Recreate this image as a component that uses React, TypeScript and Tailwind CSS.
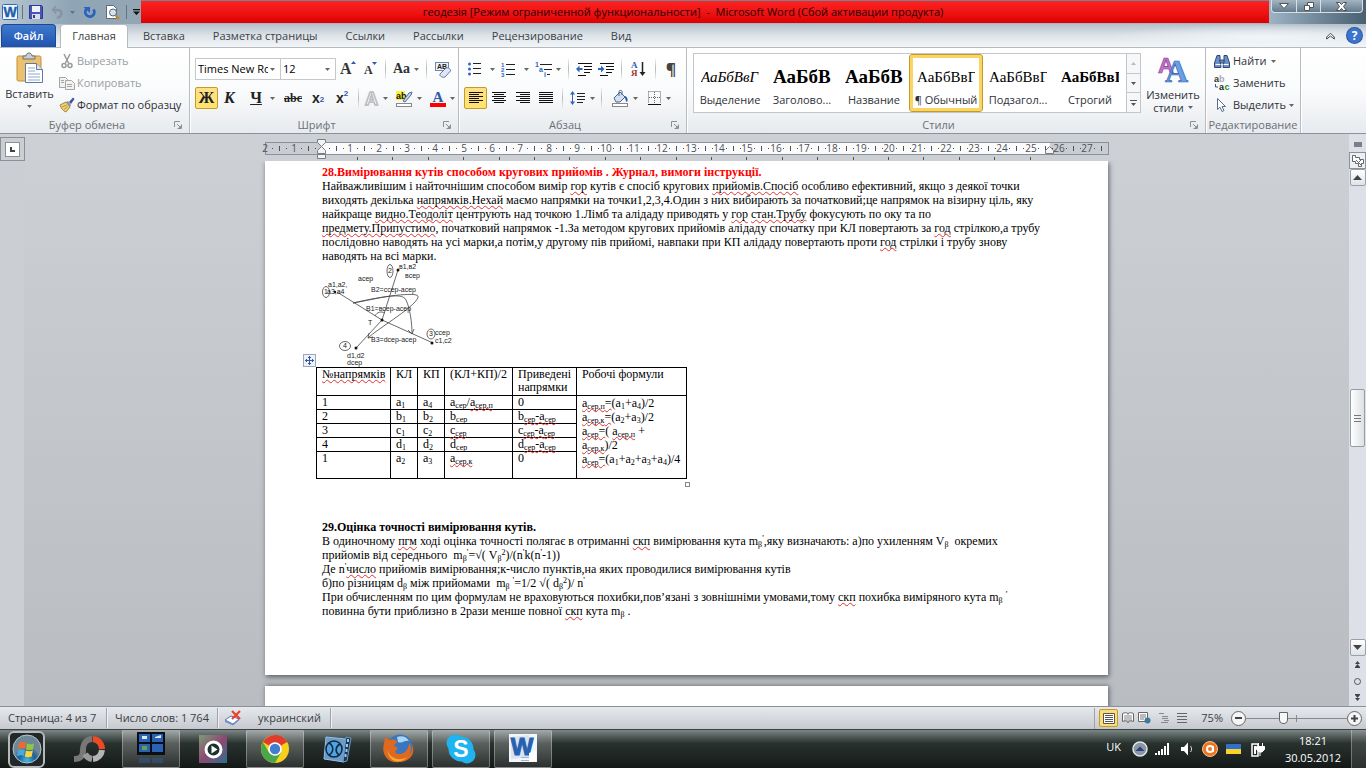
import type { ReactNode } from "react";

/* ---------- small shared parts ---------- */

function Caret({ className = "text-[#666]" }: { className?: string }) {
  return (
    <svg width="5" height="3" viewBox="0 0 5 3" className={`shrink-0 ${className}`} aria-hidden="true">
      <path d="M0 0h5L2.5 3z" fill="currentColor" />
    </svg>
  );
}

function Divider() {
  return <span className="mx-1 h-5 w-px shrink-0 bg-linear-to-b from-[#eceef0] via-[#b5bac0] to-[#eceef0]" />;
}

function Tool({ label, className = "", caret, active, children }: {
  label: string; className?: string; caret?: boolean; active?: boolean; children: ReactNode;
}) {
  return (
    <button
      type="button"
      aria-label={label}
      className={`flex h-[22px] shrink-0 items-center justify-center rounded-xs [&_svg]:overflow-visible ${caret ? "gap-1" : ""} ${active ? "border border-[#c29b29] bg-linear-to-b from-[#fde089] to-[#ffe36c]" : ""} ${className}`}
    >
      {children}
      {caret && <Caret />}
    </button>
  );
}

function Group({ title, className = "", launcher = true, children }: {
  title: string; className?: string; launcher?: boolean; children: ReactNode;
}) {
  return (
    <section aria-label={title} className={`flex shrink-0 flex-col border-r border-[#b8bcc2] shadow-[1px_0_0_#fff] ${className}`}>
      <div className="flex h-[69px]">{children}</div>
      <div className="flex h-4 items-center text-[#6b7076]">
        <span className="flex-1 text-center whitespace-nowrap">{title}</span>
        {launcher && (
          <button type="button" aria-label={`${title}: параметры`} className="w-[15px]">
            <svg width="8" height="8" viewBox="0 0 8 8" fill="none" stroke="#8b9097">
              <path d="M.5 6V.5H6" />
              <path d="M3 3l3 3M7.500 3.500v4h-4" />
              <path d="M4.500 7L7 4.500V7z" fill="#8b9097" stroke="none" />
            </svg>
          </button>
        )}
      </div>
    </section>
  );
}

/* ---------- title bar ---------- */

function TitleBar() {
  return (
    <header className="flex h-6 items-start bg-linear-to-b from-[#6d8799] to-[#a6b6c2]">
      <div className="flex h-6 w-[141px] shrink-0 items-center bg-linear-to-r from-[#b8c8d5] via-[#8fa5b5] to-[#93a6b4] pl-0.5 [&_svg]:shrink-0">
        <svg width="16" height="16" viewBox="0 0 16 16" aria-hidden="true">
          <rect x=".5" y=".5" width="15" height="15" rx="1" fill="#f4f8fd" stroke="#2f6dbb" />
          <text x="8" y="13" textAnchor="middle" fontFamily="Liberation Sans" fontWeight="bold" fontSize="14" fill="#1f5fa8" stroke="#1f5fa8" strokeWidth=".4">W</text>
        </svg>
        <span className="mx-1 h-3.5 w-px bg-[#66727d]" />
        <button type="button" aria-label="Сохранить" className="ml-0.5">
          <svg width="14" height="14" viewBox="0 0 14 14">
            <path d="M.5.500h12l1 1v12H.5z" fill="#4a54b5" stroke="#2f3889" />
            <rect x="3" y="1" width="8" height="6" fill="#eef1fb" />
            <rect x="3" y="9" width="8" height="5" fill="#d8dcf0" />
            <rect x="4" y="10" width="2" height="3" fill="#333b83" />
          </svg>
        </button>
        <button type="button" aria-label="Отменить" className="ml-2 flex items-center gap-1.5">
          <svg width="13" height="13" viewBox="0 0 13 13" fill="none" stroke="#8794a0" strokeWidth="2.500">
            <path d="M6 12c6-2 6-8 0-8H3" />
            <path d="M5 0L1.500 3.800 5 7.500" strokeWidth="1.500" />
          </svg>
          <Caret className="text-[#65727d]" />
        </button>
        <button type="button" aria-label="Повторить" className="ml-2">
          <svg width="14" height="13" viewBox="0 0 14 13" fill="none" stroke="#2a62c0" strokeWidth="2.800">
            <path d="M3.500 3a4.500 4.500 0 1 0 7 .5" />
            <path d="M.5 1h6.500v6z" fill="#2a62c0" stroke="none" />
          </svg>
        </button>
        <button type="button" aria-label="Предварительный просмотр" className="ml-2">
          <svg width="15" height="15" viewBox="0 0 15 15">
            <path d="M1.500.500h7l3 3v10h-10z" fill="#fff" stroke="#667" />
            <circle cx="8" cy="7.500" r="3.500" fill="#cfe4f7" stroke="#556677" />
            <path d="M10.500 10l3.500 4" stroke="#c8862a" strokeWidth="2.500" />
          </svg>
        </button>
        <span className="mx-1.5 h-3.5 w-px bg-[#66727d]" />
        <button type="button" aria-label="Настройка панели быстрого доступа">
          <svg width="7" height="6" viewBox="0 0 7 6"><path d="M0 0h7v1.200H0zM0 2.500h7L3.500 6z" fill="#111" /></svg>
        </button>
      </div>
      <h1 className="mt-px h-[22px] flex-1 bg-linear-to-b from-[#ff2222] to-[#dd0000] pr-11 text-center leading-[22px] whitespace-pre text-[#2c0000]">
        геодезія [Режим ограниченной функциональности]  -  Microsoft Word (Сбой активации продукта)
      </h1>
      <div className="h-6 w-[97px] shrink-0 bg-linear-to-r from-[#9eb4c4] to-[#48606f] pl-0.5">
        <div className="flex h-[13px] w-[92px] rounded-b-sm border border-t-0 border-[#d5e0e8] bg-linear-to-b from-[#a4b5c2] to-[#637b8d]">
          <button type="button" aria-label="Свернуть" className="flex w-[25px] items-center justify-center border-r border-[#d5e0e8]">
            <svg width="10" height="6" viewBox="0 0 10 6"><path d="M.5.500h9L5 5.500z" fill="#fff" stroke="#555" /></svg>
          </button>
          <button type="button" aria-label="Развернуть" className="flex w-[24px] items-center justify-center border-r border-[#d5e0e8]">
            <svg width="10" height="9" viewBox="0 0 10 9" fill="#fff" stroke="#555"><path d="M3.500.500h6v5h-6z" /><path d="M.5 3.500h5v5h-5z" /></svg>
          </button>
          <button type="button" aria-label="Закрыть" className="flex flex-1 items-center justify-center">
            <svg width="11" height="9" viewBox="0 0 11 9"><path d="M.5.500h3l2 2 2-2h3l-3 4 3 4h-3l-2-2-2 2h-3l3-4z" fill="#fff" stroke="#4d4d4d" /></svg>
          </button>
        </div>
      </div>
    </header>
  );
}

const tabs = ["Вставка", "Разметка страницы", "Ссылки", "Рассылки", "Рецензирование", "Вид"];

function TabStrip() {
  return (
    <nav className="flex h-6 items-end border-b border-[#b4bac1] bg-linear-to-b from-[#b5c1ca] via-[#dde3e8] to-[#f3f5f7] pl-px text-[#3b3f45]">
      <a href="#file" className="h-[23px] w-[55px] rounded-t-sm border border-b-0 border-[#1d478f] bg-linear-to-b from-[#3f79cf] to-[#1f52ae] text-center leading-[22px] font-semibold text-white">
        Файл
      </a>
      <a href="#home" className="mr-px -mb-px ml-1 h-6 w-[68px] rounded-t-sm border border-b-0 border-[#b4bac1] bg-white text-center leading-[22px]">
        Главная
      </a>
      {tabs.map((t) => (
        <a key={t} href="#tab" className="h-[23px] px-[14px] leading-[23px] whitespace-nowrap">{t}</a>
      ))}
      <div className="ml-auto flex h-full w-[260px] items-center justify-end gap-3 bg-radial-[at_60%_60%] from-[#f1f5f9] to-transparent to-70% pr-1">
        <button type="button" aria-label="Свернуть ленту">
          <svg width="9" height="8" viewBox="0 0 9 8" fill="none" stroke="#444"><path d="M.7 5L4.500 1.200 8.300 5v2L4.500 4 .7 7z" fill="#fff" /></svg>
        </button>
        <button type="button" aria-label="Справка" className="size-[15px] rounded-full bg-[#3b74cc] text-center text-xs leading-[15px] font-bold text-white shadow-[0_0_0_1px_#2a58a5]">?</button>
      </div>
    </nav>
  );
}

/* ---------- ribbon ---------- */

function Lines({ rows }: { rows: [number, number][] }) {
  return (
    <svg width="16" height="14" viewBox="0 0 16 14" aria-hidden="true">
      {rows.map(([x, w], i) => <rect key={i} x={x} y={1 + i * 2} width={w} height="1" fill="#111" />)}
    </svg>
  );
}

function ClipboardGroup() {
  return (
    <Group title="Буфер обмена" className="w-[190px]">
      <button type="button" className="flex w-[59px] flex-col items-center pt-1">
        <svg width="28" height="32" viewBox="0 0 28 32">
          <rect x="1" y="4" width="24" height="25" rx="1.500" fill="#ecc06c" stroke="#c58f35" />
          <path d="M7 7V4h3c0-4 6-4 6 0h3v3z" fill="#c9ced4" stroke="#6a7077" />
          <path d="M9.500 11.500h11l6 6v13h-17z" fill="#fff" stroke="#5d79a5" />
          <path d="M20.500 11.500v6h6" fill="#dbe6f5" stroke="#5d79a5" />
          <path d="M12 16h7M12 19h7M12 22h12M12 25h12M12 28h12" stroke="#8ea7cc" />
        </svg>
        <span className="mt-[3px] leading-[14px]">Вставить</span>
        <Caret className="mt-1 text-[#666]" />
      </button>
      <div className="flex flex-col pt-0.5">
        <button type="button" className="flex h-[22px] items-center gap-0.5 text-[#9a9ea3]">
          <svg width="16" height="16" viewBox="0 0 16 16" fill="none" stroke="#999" strokeWidth="1.500">
            <path d="M5 1l4.500 9M11 1L6.500 10" /><circle cx="5" cy="12.500" r="2" /><circle cx="11" cy="12.500" r="2" />
          </svg>
          Вырезать
        </button>
        <button type="button" className="flex h-[22px] items-center gap-0.5 text-[#9a9ea3]">
          <svg width="16" height="16" viewBox="0 0 16 16" fill="#f2f2f2" stroke="#a5a5a5">
            <path d="M.5 2.500h6l2 2v8h-8z" /><path d="M6.500 5.500h6l3 3v6h-9z" /><path d="M2 5.500h3M2 7.500h3M8 9.500h5M8 11.500h5" />
          </svg>
          Копировать
        </button>
        <button type="button" className="flex h-[22px] items-center gap-0.5 whitespace-nowrap">
          <svg width="16" height="16" viewBox="0 0 16 16">
            <path d="M1 8l6-3 4 5-4 5c-3-1-5-4-6-7z" fill="#efd377" stroke="#a9863a" />
            <path d="M3 10l5-2M5 12.500l4-3" stroke="#b79441" />
            <path d="M7 5l2-1 3 4-1 2z" fill="#8b94a5" />
            <path d="M10 5l4-4.500L15.500 2 12 7z" fill="#3f5597" />
          </svg>
          Формат по образцу
        </button>
      </div>
    </Group>
  );
}

function FontGroup() {
  return (
    <Group title="Шрифт" className="w-[269px]">
      <div className="flex flex-col gap-[7px] pt-2.5 pl-[5px]">
        <div className="flex items-center">
          <div className="relative flex items-center">
            <select aria-label="Шрифт" className="h-[22px] w-[86px] appearance-none border border-[#c5c9ce] bg-white pr-3 pl-0.5 text-black">
              <option>Times New Roman</option>
            </select>
            <Caret className="absolute right-1.5 text-[#666]" />
          </div>
          <div className="relative -ml-px flex items-center">
            <select aria-label="Размер шрифта" className="h-[22px] w-[56px] appearance-none border border-[#c5c9ce] bg-white pl-0.5 text-black">
              <option>12</option>
            </select>
            <Caret className="absolute right-1.5 text-[#666]" />
          </div>
          <Tool label="Увеличить размер" className="w-[25px]">
            <svg width="17" height="16" viewBox="0 0 17 16">
              <text x="0" y="13" fontFamily="Liberation Serif" fontWeight="bold" fontSize="16" fill="#333">A</text>
              <path d="M11 3h5l-2.500-3z" fill="#2f5aa8" />
            </svg>
          </Tool>
          <Tool label="Уменьшить размер" className="w-[20px]">
            <svg width="14" height="16" viewBox="0 0 14 16">
              <text x="0" y="13" fontFamily="Liberation Serif" fontWeight="bold" fontSize="12" fill="#333">A</text>
              <path d="M8 1h5l-2.500 3z" fill="#2f5aa8" />
            </svg>
          </Tool>
          <Divider />
          <Tool label="Регистр" className="w-8 font-['Liberation_Serif',serif] text-sm font-bold" caret>Aa</Tool>
          <Divider />
          <Tool label="Очистить формат" className="w-[25px]">
            <svg width="17" height="17" viewBox="0 0 17 17">
              <rect x=".5" y="1.500" width="13" height="8" fill="#eef3fa" stroke="#7086a8" />
              <text x="2" y="8" fontFamily="Liberation Sans" fontWeight="bold" fontSize="7" fill="#222">AB</text>
              <path d="M5 13l6-6c2-1 5 1 4.500 3l-5.500 6c-2 1-6-1-5-3z" fill="#dfe6f4" stroke="#6479a6" />
            </svg>
          </Tool>
        </div>
        <div className="flex items-center font-['Liberation_Serif',serif] text-base font-bold text-[#222]">
          <Tool label="Полужирный" active className="w-[23px]">Ж</Tool>
          <Tool label="Курсив" className="w-[23px] italic">К</Tool>
          <Tool label="Подчеркнутый" className="ml-1 w-[35px] gap-2 underline" caret>Ч</Tool>
          <Tool label="Зачеркнутый" className="w-[26px] text-xs line-through">abc</Tool>
          <Tool label="Подстрочный" className="w-6 font-['Liberation_Sans',sans-serif] text-sm">
            x<sub className="text-[8px] text-[#2f5aa8]">2</sub>
          </Tool>
          <Tool label="Надстрочный" className="w-6 font-['Liberation_Sans',sans-serif] text-sm">
            x<sup className="text-[8px] text-[#2f5aa8]">2</sup>
          </Tool>
          <Divider />
          <Tool label="Текстовые эффекты" className="w-[26px]" caret>
            <svg width="15" height="17" viewBox="0 0 15 17">
              <text x="1" y="15" fontFamily="Liberation Sans" fontWeight="bold" fontSize="18" fill="#fff" stroke="#b9bbbe" strokeWidth="1.500">A</text>
            </svg>
          </Tool>
          <Tool label="Цвет выделения" className="ml-1.5 w-[28px]" caret>
            <svg width="17" height="17" viewBox="0 0 17 17">
              <rect x="0" y="1" width="9" height="9" fill="#f5f242" />
              <text x="0" y="8.500" fontFamily="Liberation Sans" fontSize="9" fill="#111">ab</text>
              <path d="M7 11l6-8 3-1-1 3-6 7z" fill="#c3d4ea" stroke="#52709c" />
              <rect x=".5" y="13.500" width="15" height="3" fill="#fff" stroke="#888" />
            </svg>
          </Tool>
          <Tool label="Цвет текста" className="ml-1.5 w-[26px]" caret>
            <svg width="16" height="17" viewBox="0 0 16 17">
              <text x="2.500" y="11.500" fontFamily="Liberation Serif" fontWeight="bold" fontSize="15" fill="#2f5aa8">A</text>
              <rect y="13" width="16" height="4" fill="#f00" />
            </svg>
          </Tool>
        </div>
      </div>
    </Group>
  );
}

function IndentIcon({ flip }: { flip?: boolean }) {
  return (
    <svg width="16" height="14" viewBox="0 0 16 14" fill="none">
      <path d="M2 1.500h14M8 4.500h8M8 7.500h8M8 10.500h6M2 13.500h8" stroke="#111" />
      <path d={flip ? "M0 6h3V3.500L6.500 7 3 10.500V8H0z" : "M6.500 6h-3V3.500L0 7l3.500 3.500V8h3z"} fill="#2f66c0" />
    </svg>
  );
}

const full: [number, number][] = [[1, 14], [1, 10], [1, 14], [1, 10], [1, 14], [1, 10]];
const centered: [number, number][] = [[1, 14], [3, 10], [1, 14], [3, 10], [1, 14], [3, 10]];
const right: [number, number][] = [[1, 14], [5, 10], [1, 14], [5, 10], [1, 14], [5, 10]];
const justified: [number, number][] = [[1, 14], [1, 14], [1, 14], [1, 14], [1, 14], [1, 14]];

function ParagraphGroup() {
  return (
    <Group title="Абзац" className="w-[228px]">
      <div className="flex flex-col gap-[7px] pt-2.5 pl-[5px]">
        <div className="flex items-center">
          <Tool label="Маркеры" className="w-[34px] gap-2" caret>
            <svg width="14" height="14" viewBox="0 0 14 14">
              <g fill="#2f66c0"><circle cx="1.500" cy="2" r="1.500" /><circle cx="1.500" cy="7" r="1.500" /><circle cx="1.500" cy="12" r="1.500" /></g>
              <path d="M5 1.500h8M5 6.500h8M5 11.500h8" stroke="#222" />
            </svg>
          </Tool>
          <Tool label="Нумерация" className="w-[34px] gap-2" caret>
            <svg width="15" height="15" viewBox="0 0 15 15">
              <g fontFamily="Liberation Sans" fontWeight="bold" fontSize="6" fill="#2f66c0"><text x="0" y="5">1</text><text x="0" y="10">2</text><text x="0" y="15">3</text></g>
              <path d="M5 2.500h9M5 7.500h9M5 12.500h9" stroke="#222" />
            </svg>
          </Tool>
          <Tool label="Многоуровневый список" className="w-[32px]" caret>
            <svg width="17" height="15" viewBox="0 0 17 15">
              <g fontFamily="Liberation Sans" fontWeight="bold" fontSize="7" fill="#2f66c0"><text x="0" y="5">1</text><text x="4" y="10">a</text><text x="9" y="15">i</text></g>
              <path d="M5 2.500h12M9 7.500h8M12 12.500h3" stroke="#222" />
            </svg>
          </Tool>
          <Divider />
          <Tool label="Уменьшить отступ" className="w-[22px]"><IndentIcon /></Tool>
          <Tool label="Увеличить отступ" className="w-[22px]"><IndentIcon flip /></Tool>
          <Divider />
          <Tool label="Сортировка" className="w-[25px]">
            <svg width="15" height="16" viewBox="0 0 15 16">
              <g fontFamily="Liberation Serif" fontWeight="bold" fontSize="9"><text x="0" y="7" fill="#2f5aa8">A</text><text x="0" y="15" fill="#a03535">Я</text></g>
              <path d="M11.500 1v12" stroke="#222" strokeWidth="1.500" /><path d="M8.500 11h6L11.500 15z" fill="#222" />
            </svg>
          </Tool>
          <Divider />
          <Tool label="Отобразить все знаки" className="w-[22px] text-base font-bold text-[#444]">¶</Tool>
        </div>
        <div className="flex items-center">
          <Tool label="По левому краю" active className="w-[23px]"><Lines rows={full} /></Tool>
          <Tool label="По центру" className="w-6"><Lines rows={centered} /></Tool>
          <Tool label="По правому краю" className="w-[23px]"><Lines rows={right} /></Tool>
          <Tool label="По ширине" className="w-6"><Lines rows={justified} /></Tool>
          <Divider />
          <Tool label="Интервал" className="w-[30px]" caret>
            <svg width="16" height="16" viewBox="0 0 16 16">
              <path d="M2.500 1L0 4.500h5zM2.500 15L0 11.500h5z" fill="#2f66c0" /><path d="M2.500 4v8" stroke="#2f66c0" />
              <path d="M7 3.500h8M7 6.500h8M7 9.500h8M7 12.500h6" stroke="#222" />
            </svg>
          </Tool>
          <Divider />
          <Tool label="Заливка" className="ml-1 w-[30px]" caret>
            <svg width="17" height="17" viewBox="0 0 17 17">
              <path d="M2 8l6-6 5 5-5 5H4z" fill="#d4dff0" stroke="#49638e" /><path d="M7 6V1.500c0-1.500 3-1.500 3 0V5" fill="none" stroke="#49638e" />
              <path d="M13 6c3 1 3 5 2 6-2-1-1-4-3-5z" fill="#2f5aa8" />
              <rect x=".5" y="13.500" width="15" height="3" fill="#fff" stroke="#888" />
            </svg>
          </Tool>
          <Tool label="Границы" className="ml-1 w-[30px]" caret>
            <svg width="14" height="14" viewBox="0 0 14 14" fill="none" stroke="#666">
              <path d="M.5.500h12v12M.5.500v12M6.500 1v12M1 6.500h12" strokeDasharray="1 1" /><path d="M0 13.500h13" stroke="#111" />
            </svg>
          </Tool>
        </div>
      </div>
    </Group>
  );
}

const styleCards = [
  { name: "Выделение", sample: "АаБбВвГ", look: "text-[15px] italic" },
  { name: "Заголово...", sample: "АаБбВ", look: "text-[19px] font-bold" },
  { name: "Название", sample: "АаБбВ", look: "text-[19px] font-bold" },
  { name: "¶ Обычный", sample: "АаБбВвГ", look: "text-[15px]", active: true },
  { name: "Подзагол...", sample: "АаБбВвГ", look: "text-[15px]" },
  { name: "Строгий", sample: "АаБбВвГ", look: "text-[15px] font-bold" },
];

function StylesGroup() {
  return (
    <Group title="Стили" className="w-[519px]">
      <div className="mt-[5px] ml-1.5 flex h-[60px] border border-[#c3c7cc] bg-white">
        {styleCards.map((s) => (
          <button
            key={s.name}
            type="button"
            className={`my-px h-14 w-[72px] border-[3px] ${s.active ? "rounded-xs border-[#fbd564] outline outline-[#c29b29]" : "border-transparent"}`}
          >
            <span className={`mx-auto block h-[32px] w-[58px] overflow-hidden text-left font-['Liberation_Serif',serif] leading-[32px] whitespace-nowrap text-black ${s.look}`}>
              {s.sample}
            </span>
            <span className="block leading-[13px] whitespace-nowrap">{s.name}</span>
          </button>
        ))}
        <div className="flex w-[14px] flex-col divide-y divide-[#c3c7cc] border-l border-[#c3c7cc] bg-[#f6f7f8]">
          <button type="button" aria-label="Вверх" className="flex flex-1 items-center justify-center"><Caret className="rotate-180 text-[#bbb]" /></button>
          <button type="button" aria-label="Вниз" className="flex flex-1 items-center justify-center"><Caret className="text-[#555]" /></button>
          <button type="button" aria-label="Дополнительно" className="flex flex-1 flex-col items-center justify-center gap-0.5">
            <span className="h-px w-[7px] bg-[#555]" /><Caret className="text-[#555]" />
          </button>
        </div>
      </div>
      <button type="button" className="flex flex-1 flex-col items-center pt-[7px] leading-[13px]">
        <svg width="30" height="28" viewBox="0 0 30 28" className="mb-[5px] overflow-visible" aria-hidden="true">
          <text x="0" y="18" fontFamily="Liberation Sans" fontWeight="bold" fontSize="22" fill="#c173c9" stroke="#8a3c95" strokeWidth=".7">A</text>
          <text x="7" y="27" fontFamily="Liberation Serif" fontWeight="bold" fontSize="32" fill="#6a9fe4" stroke="#2f62ad" strokeWidth=".7">A</text>
        </svg>
        <span>Изменить</span>
        <span className="flex items-center gap-1">стили <Caret /></span>
      </button>
    </Group>
  );
}

function EditingGroup() {
  return (
    <Group title="Редактирование" launcher={false} className="w-[95px]">
      <div className="flex flex-col pt-0.5 pl-2">
        <button type="button" className="flex h-[22px] items-center gap-[3px]">
          <svg width="16" height="15" viewBox="0 0 16 15" fill="#6f8fc4" stroke="#2b4678">
            <path d="M3 1.500h3v4L7 13.500H.5V9z" /><path d="M10 1.500h3L15.500 9v4.500H9l1-8z" /><path d="M6 6h4v3H6z" />
            <path d="M1.500 10.500h5M9.500 10.500h5" stroke="#fff" />
          </svg>
          Найти <Caret className="ml-0.5 text-[#666]" />
        </button>
        <button type="button" className="flex h-[22px] items-center gap-[3px]">
          <svg width="16" height="16" viewBox="0 0 16 16">
            <g fontFamily="Liberation Sans" fontWeight="bold" fontSize="9"><text x="0" y="7" fill="#333">a</text><text x="5" y="7" fill="#aaa">b</text><text x="5" y="15" fill="#222">a</text><text x="10.500" y="15" fill="#1d8a2f">c</text></g>
            <path d="M1.500 9v3H4" fill="none" stroke="#2f5aa8" />
          </svg>
          Заменить
        </button>
        <button type="button" className="flex h-[22px] items-center gap-[3px]">
          <svg width="16" height="16" viewBox="0 0 16 16"><path d="M3.500 1.500v11l2.500-2.300 2 4.300 2-1-2-4h3.500z" fill="#fff" stroke="#5a6e8f" /></svg>
          Выделить <Caret />
        </button>
      </div>
    </Group>
  );
}

/* ---------- document ---------- */

const CM = 28.35;
const ZERO = 57;

function Ruler() {
  const marks = Array.from({ length: 30 }, (_, i) => i - 2);
  return (
    <svg width="844" height="27" viewBox="0 0 844 27" className="shrink-0 overflow-visible" aria-hidden="true">
      <rect x=".5" y="8.500" width="843" height="12" fill="#c9ccd1" stroke="#8a9097" />
      <rect x={ZERO} y="9" width="728" height="11" fill="#fbfbfc" />
      {marks.map((m) => {
        const x = Math.round(ZERO + m * CM);
        return (
          <g key={m} fill="#4c5259">
            {m !== 0 && <text x={x} y="18" textAnchor="middle" fontFamily="Open Sans" fontSize="10">{Math.abs(m)}</text>}
            <rect x={x + 7} y="14" width="1" height="1" />
            {x + 14 < 840 && <rect x={x + 14} y="12" width="1" height="5" />}
            {x + 21 < 840 && <rect x={x + 21} y="14" width="1" height="1" />}
          </g>
        );
      })}
      {Array.from({ length: 20 }, (_, i) => (
        <rect key={i} x={Math.round(92 + i * 35.4)} y="23" width="1" height="3" fill="#555" />
      ))}
      <g fill="#f3f3f3" stroke="#7a7f85">
        <path d="M52.500 5.500h8v3l-4 4-4-4z" /><path d="M52.500 19.500v-3l4-4 4 4v3z" /><path d="M52.500 20.500h8v4h-8z" />
        <path d="M780.500 19.500v-3l4-4 4 4v3z" />
      </g>
    </svg>
  );
}

// spelling error
function Err({ children }: { children: ReactNode }) {
  return (
    <span className="underline decoration-[#e03030] decoration-wavy decoration-1 underline-offset-1 [text-decoration-skip-ink:none]">
      {children}
    </span>
  );
}

function Sub({ children }: { children: ReactNode }) {
  return <sub className="text-[8px]">{children}</sub>;
}

function Diagram() {
  return (
    <svg width="134" height="104" viewBox="0 0 134 104" className="block" fill="none" stroke="#444" strokeWidth=".8">
      <path d="M15 29L60 57 111 80M60 57L76 7M60 57L34 85" />
      <path d="M31 40C60 33 94 29 96 33C98 41 55 66 46 75" />
      <path d="M31 40C55 36 80 28 84 37C88 45 90 60 90 71M86 67l4 4 2-5" />
      <path d="M53 53c2-4 6-5 10-3M46 75l1-5M46 75l5-1" />
      <ellipse cx="68" cy="8" rx="3" ry="6.500" /><ellipse cx="4" cy="29" rx="3.500" ry="5.500" />
      <ellipse cx="109" cy="71" rx="4" ry="5" /><ellipse cx="23" cy="83" rx="5.500" ry="4.500" />
      <g fill="#111" stroke="none">
        <circle cx="76" cy="7" r="1.500" /><circle cx="60" cy="57" r="1.500" /><circle cx="110" cy="80" r="1.500" /><circle cx="34" cy="85" r="1.500" /><circle cx="13" cy="29" r="1.200" />
      </g>
      <g fill="#222" stroke="none" fontFamily="Liberation Sans" fontSize="7">
        <text x="77" y="6">в1,в2</text><text x="83" y="15">всер</text><text x="36" y="18">асер</text>
        <text x="6" y="24">а1,а2,</text><text x="5" y="31">а3,а4</text><text x="49" y="29">В2=ссер-асер</text>
        <text x="44" y="48">В1=всер-асер</text><text x="46" y="62">Т</text><text x="49" y="79">В3=dсер-асер</text>
        <text x="113" y="72">ссер</text><text x="113" y="80">с1,с2</text><text x="25" y="95">d1,d2</text><text x="25" y="102">dсер</text>
        <text x="66" y="10">2</text><text x="2" y="31">1</text><text x="107" y="73">3</text><text x="21" y="85">4</text>
      </g>
    </svg>
  );
}

const rows: { n: string; kl: string; kp: string; mean: ReactNode; reduced: ReactNode }[] = [
  { n: "1", kl: "a1", kp: "a4", mean: <>a<Sub>сер</Sub>/<Err>a<Sub>сер.п</Sub></Err></>, reduced: "0" },
  { n: "2", kl: "b1", kp: "b2", mean: <>b<Sub>сер</Sub></>, reduced: <>b<Err><Sub>сер</Sub>-a<Sub>сер</Sub></Err></> },
  { n: "3", kl: "c1", kp: "c2", mean: <Err>c<Sub>сер</Sub></Err>, reduced: <>c<Err><Sub>сер</Sub>-a<Sub>сер</Sub></Err></> },
  { n: "4", kl: "d1", kp: "d2", mean: <>d<Sub>сер</Sub></>, reduced: <>d<Err><Sub>сер</Sub>-a<Sub>сер</Sub></Err></> },
  { n: "1", kl: "a2", kp: "a3", mean: <Err>a<Sub>сер.к</Sub></Err>, reduced: "0" },
];

function Indexed({ value }: { value: string }) {
  return <>{value[0]}<Sub>{value[1]}</Sub></>;
}

function DirectionsTable() {
  return (
    <table className="-ml-1.5 w-[370px] table-fixed border-collapse text-left [&_td]:border [&_td]:border-black [&_td]:pl-[5px] [&_td]:align-top [&_th]:border [&_th]:border-black [&_th]:pl-[5px] [&_th]:align-top [&_th]:font-normal">
      <colgroup>
        <col className="w-[74px]" /><col className="w-[27px]" /><col className="w-[27px]" />
        <col className="w-[68px]" /><col className="w-[64px]" /><col className="w-[110px]" />
      </colgroup>
      <thead>
        <tr className="h-7 leading-[13px]">
          <th><Err>№напрямків</Err></th><th>КЛ</th><th>КП</th><th>(КЛ+КП)/2</th><th>Приведені<br />напрямки</th><th>Робочі формули</th>
        </tr>
      </thead>
      <tbody>
        {rows.map((r, i) => (
          <tr key={i} className={`leading-[13px] ${i === 4 ? "h-[27px]" : "h-[14px]"}`}>
            <td>{r.n}</td>
            <td><Indexed value={r.kl} /></td>
            <td><Indexed value={r.kp} /></td>
            <td>{r.mean}</td>
            <td>{r.reduced}</td>
            {i === 0 && (
              <td rowSpan={5} className="leading-[14px]">
                <Err>a<Sub>сер.п</Sub>=</Err>(a<Sub>1</Sub>+a<Sub>4</Sub>)/2<br />
                <Err>a<Sub>сер.к</Sub>=</Err>(a<Sub>2</Sub>+a<Sub>3</Sub>)/2<br />
                <Err>a<Sub>сер</Sub>=</Err>( <Err>a<Sub>сер.п</Sub></Err> +<br />
                <Err>a<Sub>сер.к</Sub></Err>)/2<br />
                <Err>a<Sub>сер</Sub>=</Err>(a<Sub>1</Sub>+a<Sub>2</Sub>+a<Sub>3</Sub>+a<Sub>4</Sub>)/4
              </td>
            )}
          </tr>
        ))}
      </tbody>
    </table>
  );
}

function Document() {
  return (
    <article className="w-[843px] shrink-0 bg-white px-[57px] pt-1 pb-[57px] font-['Liberation_Serif',serif] text-xs leading-[14px] whitespace-nowrap text-black shadow-[1px_2px_5px_#5b6066]">
      <h2 className="font-bold text-[#f00]">28.Вимірювання кутів способом кругових прийомів . Журнал, вимоги інструкції.</h2>
      <p>Найважливішим і найточнішим способом вимір <Err>гор</Err> кутів є спосіб кругових <Err>прийомів.Спосіб</Err> особливо ефективний, якщо з деякої точки</p>
      <p>виходять декілька <Err>напрямків.Нехай</Err> маємо напрямки на точки1,2,3,4.Один з них вибирають за початковий;це напрямок на візирну ціль, яку</p>
      <p>найкраще <Err>видно.Теодоліт</Err> центрують над точкою 1.Лімб та алідаду приводять у <Err>гор</Err> <Err>стан.Трубу</Err> фокусують по оку та по</p>
      <p><Err>предмету.Припустимо</Err>, початковий напрямок -1.За методом кругових прийомів алідаду спочатку при КЛ повертають за <Err>год</Err> стрілкою,а трубу</p>
      <p>послідовно наводять на усі марки,а потім,у другому пів прийомі, навпаки при КП алідаду повертають проти <Err>год</Err> стрілки і трубу знову</p>
      <p>наводять на всі марки.</p>
      <div className="relative">
        <Diagram />
        <button type="button" aria-label="Выделить таблицу" className="absolute bottom-0 -left-[19px] flex size-[13px] items-center justify-center border border-[#9aa7bd] bg-[#eef2f8]">
          <svg width="9" height="9" viewBox="0 0 9 9" fill="none" stroke="#2f5aa8"><path d="M4.500 0v9M0 4.500h9M3 1.500h3M3 7.500h3M1.500 3v3M7.500 3v3" /></svg>
        </button>
      </div>
      <div className="relative w-[364px]">
        <DirectionsTable />
        <span className="absolute -right-1 -bottom-2 size-[5px] border border-[#888] bg-white" />
      </div>
      <h2 className="mt-[41px] font-bold">29.Оцінка точності вимірювання кутів.</h2>
      <p>В одиночному <Err>пгм</Err> ході оцінка точності полягає в отриманні <Err>скп</Err> вимірювання кута m<Sub>β</Sub><sup>'</sup>,яку визначають: а)по ухиленням V<Sub>β</Sub>&nbsp; окремих</p>
      <p>прийомів від середнього&nbsp; m<Sub>β</Sub><sup>'</sup>=√( V<Sub>β</Sub><sup className="text-[8px]">2</sup>)/(n<sup>'</sup>k(n<sup>'</sup>-1))</p>
      <p>Де n<sup>'</sup><Err>число</Err> прийомів вимірювання;к-число пунктів,на яких проводилися вимірювання кутів</p>
      <p>б)по різницям d<Sub>β</Sub> між прийомами&nbsp; m<Sub>β</Sub> <sup>'</sup>=1/2 √( d<Sub>β</Sub><sup className="text-[8px]">2</sup>)/ n<sup>'</sup></p>
      <p>При обчисленням по цим формулам не враховуються похибки,пов’язані з зовнішніми умовами,тому <Err>скп</Err> похибка виміряного кута m<Sub>β</Sub> <sup>'</sup></p>
      <p>повинна бути приблизно в 2рази менше повної <Err>скп</Err> кута m<Sub>β</Sub> .</p>
    </article>
  );
}

function ScrollBar() {
  return (
    <div className="flex w-[17px] shrink-0 flex-col items-center bg-[#dde1e7] pt-2">
      <span className="h-[5px] w-2 bg-[#7b8087]" />
      <button type="button" aria-label="Линейка" className="mt-[5px] flex size-[17px] items-center justify-center border border-[#8c929a] bg-[#eceff3]">
        <svg width="12" height="12" viewBox="0 0 12 12" fill="#fff" stroke="#666"><path d="M.5.500h3v2h4v2h4v4h-2v3h-3v-3h-3v-2h-3z" /><path d="M4 5l5 5M9 5l-2 2" /></svg>
      </button>
      <button type="button" aria-label="Прокрутить вверх" className="flex h-[17px] w-4 items-center justify-center rounded-xs border border-[#9aa0a8] bg-linear-to-b from-white to-[#dfe3e8]">
        <svg width="9" height="5" viewBox="0 0 9 5"><path d="M0 5h9L4.500 0z" fill="#444" /></svg>
      </button>
      <div className="flex w-full flex-1 flex-col items-center">
        <div className="grow-[204]" />
        <div className="flex h-[58px] w-[15px] flex-col items-center justify-center gap-0.5 rounded-xs border border-[#979da5] bg-linear-to-r from-white to-[#dde0e5]">
          <span className="h-px w-[7px] bg-[#777]" /><span className="h-px w-[7px] bg-[#777]" /><span className="h-px w-[7px] bg-[#777]" />
        </div>
        <div className="grow-[192]" />
      </div>
      <button type="button" aria-label="Прокрутить вниз" className="flex h-[17px] w-4 items-center justify-center rounded-xs border border-[#9aa0a8] bg-linear-to-b from-white to-[#dfe3e8]">
        <svg width="9" height="5" viewBox="0 0 9 5"><path d="M0 0h9L4.500 5z" fill="#444" /></svg>
      </button>
      <button type="button" aria-label="Предыдущая страница" className="flex h-[17px] items-center">
        <svg width="5" height="7" viewBox="0 0 5 7" fill="#444"><path d="M0 3h5L2.500 0zM0 6h5L2.500 3zM0 6h5v1H0z" /></svg>
      </button>
      <button type="button" aria-label="Объект перехода" className="flex h-4 items-center"><span className="size-[7px] rounded-full border border-[#555]" /></button>
      <button type="button" aria-label="Следующая страница" className="flex h-[17px] items-center">
        <svg width="5" height="7" viewBox="0 0 5 7" fill="#444"><path d="M0 0h5v1H0zM0 1h5L2.500 4zM0 4h5L2.500 7z" /></svg>
      </button>
    </div>
  );
}

/* ---------- status bar ---------- */

function StatusBar() {
  return (
    <footer className="flex h-[23px] shrink-0 items-center border-t border-[#8b9097] bg-linear-to-b from-[#e6e9ed] to-[#c6cad0] pr-1 text-[#3b3f45] [&>span]:whitespace-nowrap">
      <span className="w-[107px] border-r border-[#9fa4ab] pl-2 leading-[20px] shadow-[1px_0_0_#eef0f3]">Страница: 4 из 7</span>
      <span className="w-[111px] border-r border-[#9fa4ab] pl-2 leading-[20px] shadow-[1px_0_0_#eef0f3]">Число слов: 1 764</span>
      <button type="button" aria-label="Правописание" className="ml-1.5">
        <svg width="18" height="16" viewBox="0 0 18 16">
          <path d="M1 10l6-4 8 3-6 5z" fill="#fff" stroke="#5672b5" /><path d="M1 10v2l8 3.500 6-5V9l-6 5z" fill="#6f8fd0" />
          <path d="M8 1l8 8M16 1L8 9" stroke="#e8432c" strokeWidth="2.200" />
        </svg>
      </button>
      <span className="ml-4 w-[73px] border-r border-[#9fa4ab] leading-[20px] shadow-[1px_0_0_#eef0f3]">украинский</span>
      <div className="flex flex-1 items-center justify-end">
        <span className="mr-1 h-[21px] w-px bg-[#9fa4ab]" />
        <button type="button" aria-label="Разметка страницы" className="mr-1 flex h-[18px] w-[19px] items-center justify-center rounded-xs border border-[#c29b29] bg-[#fddc7a]">
          <svg width="12" height="11" viewBox="0 0 12 11" fill="#fff" stroke="#555"><path d="M.5.500h11v10H.5z" /><path d="M2 2.500h8M2 4.500h8M2 6.500h8M2 8.500h8" /></svg>
        </button>
        <button type="button" aria-label="Режим чтения" className="mr-1">
          <svg width="12" height="12" viewBox="0 0 12 12" fill="#fff" stroke="#666"><path d="M.5 1.500c2-1 4-1 5.500 0 1.500-1 3.500-1 5.500 0v8c-2-1-4-1-5.500 1-1.500-2-3.500-2-5.500-1z" /><path d="M6 2v9M2 4h3M2 6h3M2 8h3M7 4h3M7 6h3M7 8h3" strokeWidth=".8" /></svg>
        </button>
        <button type="button" aria-label="Веб-документ" className="mr-2">
          <svg width="13" height="12" viewBox="0 0 13 12"><path d="M.5.500h9v9h-9z" fill="#fff" stroke="#666" /><path d="M2 3h6M2 5h6M2 7h4" stroke="#777" /><circle cx="9.500" cy="8.500" r="3" fill="#3d7a9d" /></svg>
        </button>
        <button type="button" aria-label="Структура" className="mr-2">
          <svg width="10" height="10" viewBox="0 0 10 10" stroke="#888"><path d="M0 .500h5M3 3.500h6M3 5.500h6M5 7.500h5M2 9.500h7" /></svg>
        </button>
        <button type="button" aria-label="Черновик" className="mr-3.5">
          <svg width="10" height="10" viewBox="0 0 10 10" stroke="#666"><path d="M0 .500h10M0 3.500h10M0 6.500h10M0 9.500h10" /></svg>
        </button>
        <button type="button" className="mr-2">75%</button>
        <button type="button" aria-label="Уменьшить" className="flex size-[15px] items-center justify-center rounded-full border border-[#666] bg-[#f4f5f7]"><span className="h-0.5 w-[7px] bg-[#444]" /></button>
        <input
          type="range"
          aria-label="Масштаб"
          min={10}
          max={190}
          defaultValue={75}
          className="h-4 w-[101px] appearance-none bg-[linear-gradient(#868b92,#868b92),linear-gradient(#868b92,#868b92)] bg-[length:100%_1px,1px_7px] bg-[position:0_50%,50%_50%] bg-no-repeat [&::-webkit-slider-thumb]:h-3 [&::-webkit-slider-thumb]:w-[9px] [&::-webkit-slider-thumb]:appearance-none [&::-webkit-slider-thumb]:rounded-b-sm [&::-webkit-slider-thumb]:border [&::-webkit-slider-thumb]:border-[#666] [&::-webkit-slider-thumb]:bg-[#f6f7f8]"
        />
        <button type="button" aria-label="Увеличить" className="flex size-[15px] items-center justify-center rounded-full border border-[#666] bg-[#f4f5f7]">
          <svg width="7" height="7" viewBox="0 0 7 7"><path d="M3.500 0v7M0 3.500h7" stroke="#444" strokeWidth="2" /></svg>
        </button>
      </div>
    </footer>
  );
}

/* ---------- taskbar ---------- */

const apps: { name: string; open?: boolean; icon: ReactNode }[] = [
  {
    name: "Диск",
    icon: (
      <svg width="32" height="28" viewBox="0 0 32 28" fill="none" strokeWidth="6">
        <path d="M1 24c7 0 9-3 9-9 0-7 4-11 9-11" stroke="#777" /><path d="M20 4a10 10 0 0 1 9 10" stroke="#f04a24" />
        <path d="M29 15a10 10 0 0 1-9 9" stroke="#b5b5b5" /><path d="M19 24a10 10 0 0 1-7-5" stroke="#999" />
      </svg>
    ),
  },
  {
    name: "Рабочие столы",
    open: true,
    icon: (
      <svg width="28" height="34" viewBox="0 0 28 34">
        <rect width="28" height="23" fill="#0b0f18" />
        <path d="M2 2h11v8H2zM15 2h11v8H15zM2 12h11v8H2zM15 12h11v8H15z" fill="#2b62b4" />
        <path d="M5 4h5v3H5zM18 5l6-2v3h-6z" fill="#dfe8ee" /><path d="M5 14h5v4H5z" fill="#67a04c" />
        <path d="M2 26h11v5H2zM15 26h11v5H15z" fill="#2b62b4" opacity=".4" />
      </svg>
    ),
  },
  {
    name: "Плеер",
    icon: (
      <svg width="28" height="28" viewBox="0 0 28 28">
        <defs><linearGradient id="mp" x2="1" y2="1"><stop stopColor="#7b9c77" /><stop offset=".5" stopColor="#8b4a72" /><stop offset="1" stopColor="#2c6f8f" /></linearGradient></defs>
        <rect width="28" height="28" fill="url(#mp)" /><circle cx="14.500" cy="14.500" r="7.500" fill="#1b332d" stroke="#fff" strokeWidth="3" /><path d="M12.500 10.500l6 4-6 4z" fill="#fff" />
      </svg>
    ),
  },
  {
    name: "Chrome",
    open: true,
    icon: (
      <svg width="28" height="28" viewBox="0 0 28 28">
        <circle cx="14" cy="14" r="14" fill="#f8cf1d" /><path d="M14 14L1.900 7A14 14 0 0 1 26.100 7z" fill="#df3b2e" /><path d="M14 0a14 14 0 0 1 12.100 7H14z" fill="#df3b2e" />
        <path d="M1.900 7A14 14 0 0 0 14 28l6-10.500L14 14 8 17.500z" fill="#48a849" /><circle cx="14" cy="14" r="6.800" fill="#fff" /><circle cx="14" cy="14" r="5.200" fill="#3f7fd0" />
      </svg>
    ),
  },
  {
    name: "Видео",
    icon: (
      <svg width="30" height="28" viewBox="0 0 30 28">
        <path d="M4 2l20 2-2 23-20-3z" fill="#6b9cc9" stroke="#94bfe2" /><path d="M24 2l5 1-4 23-4 1z" fill="#1b3552" stroke="#6b9cc9" />
        <path d="M26 4v3M25 9v3M24.500 14v3M23.500 19v3" stroke="#9cc8ec" strokeWidth="2" />
        <circle cx="12" cy="14" r="8" fill="#4ea3e0" stroke="#10263d" strokeWidth="1.500" /><path d="M7 8c5 3 5 9 0 12M18 9c-5 3-5 8-1 11" fill="none" stroke="#10263d" strokeWidth="1.500" />
      </svg>
    ),
  },
  {
    name: "Firefox",
    open: true,
    icon: (
      <svg width="32" height="30" viewBox="0 0 32 30">
        <circle cx="17" cy="13" r="12.500" fill="#3a76bd" /><path d="M14 3c5-2 10 0 12 4-5-1-6 3-11 1z" fill="#a9d4f2" />
        <path d="M2 3c2 2 4 3 6 3 3-1 5 0 6 2-1 2-3 2-3 4 3 1 4 2 3 4-3 1-2 4 2 4 6 0 10-5 10-11 3 4 2 9 0 12 3-3 4-8 3-12 4 10-1 19-13 19C4 30-2 19 1 10z" fill="#df6a1f" />
        <path d="M4 15c2 9 12 13 20 8-5 7-18 7-20-8z" fill="#f6ad35" />
      </svg>
    ),
  },
  {
    name: "Skype",
    open: true,
    icon: (
      <svg width="30" height="30" viewBox="0 0 30 30">
        <circle cx="9" cy="9" r="8.500" fill="#1fb4ef" /><circle cx="21" cy="21" r="8.500" fill="#1fb4ef" /><circle cx="15" cy="15" r="12.500" fill="#1fb4ef" />
        <text x="15" y="23" textAnchor="middle" fontFamily="Liberation Sans" fontWeight="bold" fontSize="23" fill="#fff">S</text>
      </svg>
    ),
  },
  {
    name: "Word",
    open: true,
    icon: (
      <svg width="28" height="29" viewBox="0 0 28 29">
        <rect width="28" height="28" fill="#f2f6fb" /><path d="M2 3l18-2v22L2 25z" fill="#2a62b4" opacity=".12" />
        <path d="M12 23.500h14M12 26.500h10" stroke="#9ab3d6" />
        <text x="13" y="21" textAnchor="middle" fontFamily="Liberation Sans" fontWeight="bold" fontSize="24" fill="#2660b0" stroke="#2660b0">W</text>
        <path d="M20 19l7-2v10l-7 1z" fill="#fff" />
      </svg>
    ),
  },
];

function Taskbar() {
  return (
    <nav aria-label="Панель задач" className="flex h-[39px] shrink-0 items-center border-t border-[#3b4442] bg-linear-to-b from-[#7c8785] via-[#29322f] via-35% to-[#141918] text-white">
      <button type="button" aria-label="Пуск" className="ml-2 flex size-[37px] shrink-0 items-center justify-center rounded-md border-2 border-[#b5b9ba] bg-[#22272a]">
        <svg width="30" height="30" viewBox="0 0 30 30">
          <defs><radialGradient id="orb" cy=".9"><stop stopColor="#43b8e8" /><stop offset=".6" stopColor="#1f5e94" /><stop offset="1" stopColor="#6d8796" /></radialGradient></defs>
          <circle cx="15" cy="15" r="14" fill="url(#orb)" stroke="#b4c4cc" />
          <path d="M7 9c3-2 5-1 7 0l-1 6c-2-1-4-1-7 0z" fill="#ec6a30" /><path d="M15 9.500c3 1 4 1 7 0l-1 6c-3 1-5 1-7 0z" fill="#8fc645" />
          <path d="M6 16c3-1 5-1 7 0l-1 6c-2-1-4-1-7 0z" fill="#48a8e0" /><path d="M13.800 16.500c3 1 5 1 7 0l-1 6c-3 1-5 1-7 0z" fill="#fbd33a" />
        </svg>
      </button>
      <div className="ml-[15px] flex h-full gap-1">
        {apps.map((a) => (
          <button
            key={a.name}
            type="button"
            aria-label={a.name}
            className={`flex h-full w-[58px] items-center justify-center rounded-xs ${a.open ? "border border-t-0 border-white/30 bg-linear-to-b from-white/30 to-white/10" : ""}`}
          >
            {a.icon}
          </button>
        ))}
      </div>
      <div className="ml-auto flex h-full items-center">
        <span className="mr-[11px] mb-1">UK</span>
        <svg width="16" height="16" viewBox="0 0 16 16" className="mr-1.5"><circle cx="8" cy="8" r="7" fill="#8a96a3" stroke="#dfe4e8" strokeWidth="1.500" /><path d="M3.500 10h9L8 5.500z" fill="#2b3f7c" /></svg>
        <svg width="16" height="12" viewBox="0 0 16 12" fill="#fff" className="mr-2.5"><path d="M1 10h2v2H1zM4 8h2v4H4zM7 6h2v6H7zM10 3h2v9h-2zM13 0h2v12h-2z" /></svg>
        <svg width="14" height="14" viewBox="0 0 14 14" className="mr-2"><path d="M1 5h3l4-4.500v13L4 9H1z" fill="#fff" /><path d="M10.500 4c1.500 2 1.500 4 0 6" fill="none" stroke="#ddd" /></svg>
        <svg width="16" height="16" viewBox="0 0 16 16" className="mr-2"><circle cx="8" cy="8" r="7.500" fill="#ee7622" stroke="#ffc48a" /><circle cx="8" cy="8" r="3" fill="none" stroke="#fff" strokeWidth="2" /><path d="M11 5v6" stroke="#fff" strokeWidth="2" /></svg>
        <svg width="15" height="10" viewBox="0 0 15 10" className="mr-2.5"><path d="M0 0h15v5H0z" fill="#2f6fd0" /><path d="M0 5h15v5H0z" fill="#f6d528" /></svg>
        <svg width="14" height="15" viewBox="0 0 14 15" className="mr-5"><path d="M1 2h6v12H1z" fill="none" stroke="#fff" strokeWidth="1.500" /><path d="M3 4h2v8H3z" fill="#fff" /><path d="M7.500 1v3M11.500 1v3M5.500 4.500h8v3l-2.500 2.500H8L5.500 7.500zM9 10v4" fill="#fff" stroke="#fff" /></svg>
        <time className="mr-2.5 text-center leading-[17px]">18:21<br />30.05.2012</time>
        <button type="button" aria-label="Свернуть все окна" className="h-full w-[15px] border-l border-white/30 bg-white/10" />
      </div>
    </nav>
  );
}

export default function App() {
  return (
    <div className="flex h-screen flex-col overflow-hidden bg-[#c6c9ce] font-['Open_Sans','Noto_Sans',sans-serif] text-[11px] text-[#2e3238]">
      <TitleBar />
      <TabStrip />
      <div className="flex h-[86px] shrink-0 border-b border-[#8d929a] bg-linear-to-b from-white via-[#fafbfc] to-[#e7eaee]">
        <ClipboardGroup />
        <FontGroup />
        <ParagraphGroup />
        <StylesGroup />
        <EditingGroup />
      </div>
      <main className="flex min-h-0 flex-1 bg-linear-to-b from-[#cdd0d5] to-[#b9bcc1]">
        <div className="w-6 shrink-0 bg-[#cbced3] pt-[3px]">
          <button type="button" aria-label="Позиция табуляции" className="flex h-6 w-[25px] items-center justify-center border border-[#8b9097]">
            <span className="flex size-[15px] items-center justify-center border border-[#8b9097] bg-white">
              <span className="size-[5px] border-b-2 border-l-2 border-[#444]" />
            </span>
          </button>
        </div>
        <div className="flex min-w-0 flex-1 flex-col items-center overflow-hidden">
          <Ruler />
          <div className="flex min-h-0 w-full flex-1 flex-col items-center gap-[11px] overflow-hidden">
            <Document />
            <div className="h-[400px] w-[843px] shrink-0 bg-white shadow-[1px_0_5px_#5b6066]" />
          </div>
        </div>
        <ScrollBar />
      </main>
      <StatusBar />
      <Taskbar />
    </div>
  );
}
